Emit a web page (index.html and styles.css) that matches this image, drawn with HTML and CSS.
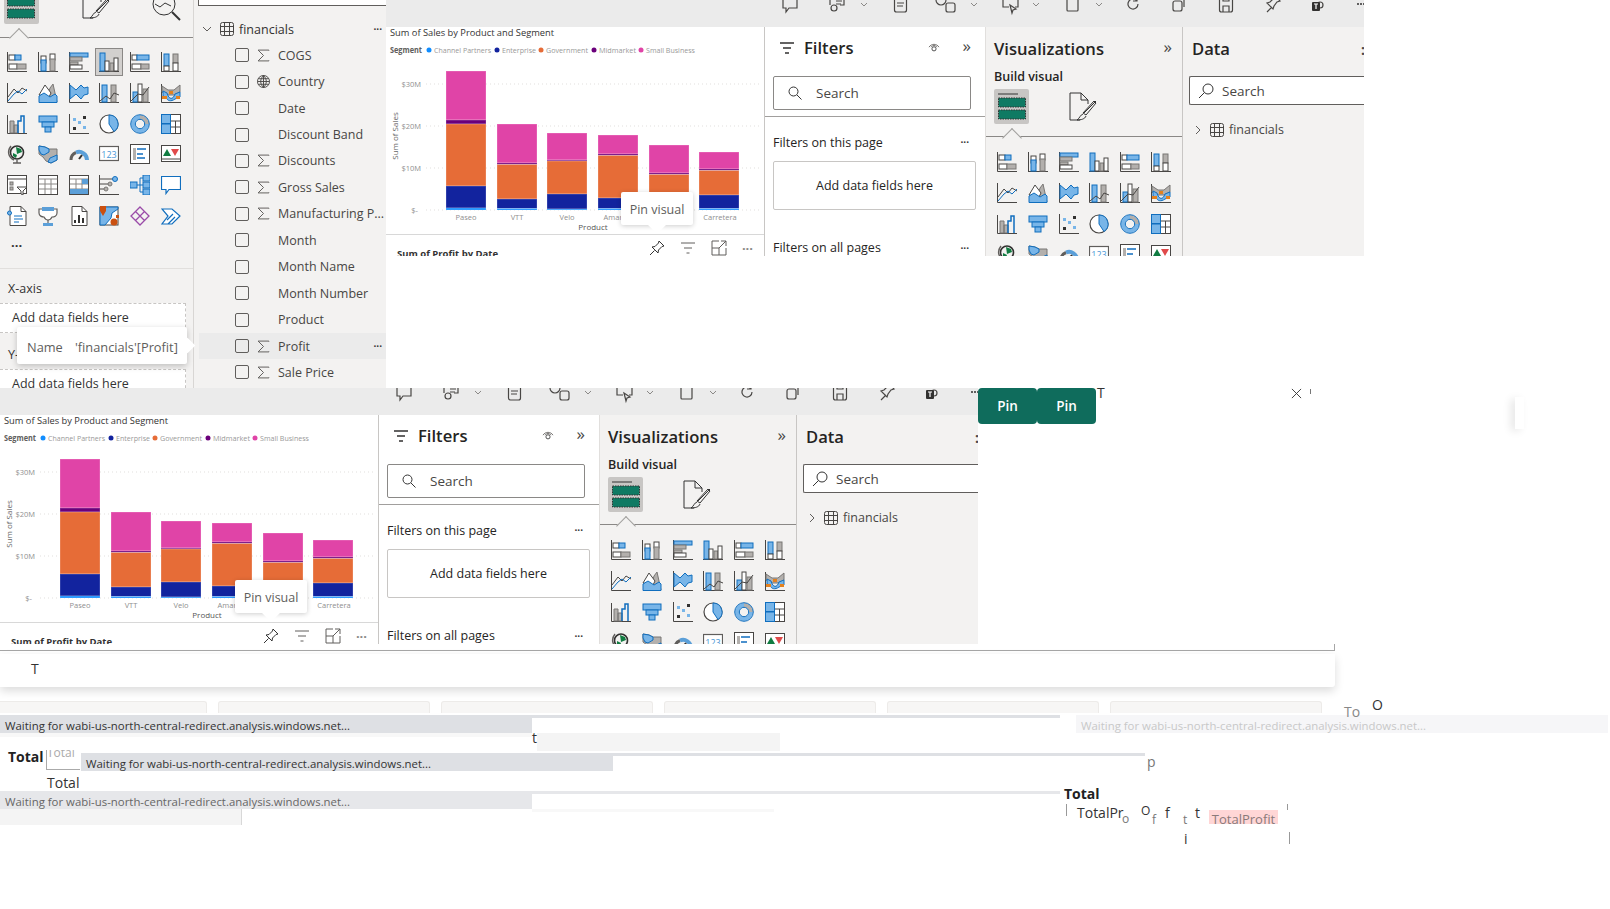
FILE: index.html
```html
<!DOCTYPE html>
<html lang="en">
<head>
<meta charset="utf-8">
<title>Power BI</title>
<link rel="stylesheet" href="styles.css">
</head>
<body>
<svg class="defs" aria-hidden="true">
<symbol id="i1" viewBox="0 0 20 20"><path class="k" d="M.5 0v19.5H20"/><rect class="w" x="2" y="3" width="6" height="5"/><rect class="b" x="8" y="3" width="6" height="5"/><rect class="w" x="2" y="12" width="8" height="5"/><rect class="g" x="10" y="12" width="9" height="5"/></symbol>
<symbol id="i2" viewBox="0 0 20 20"><path class="k" d="M0 19.5h20M.5 0v20"/><rect class="w" x="3" y="4" width="5" height="7"/><rect class="b" x="3" y="8" width="5" height="11"/><rect class="w" x="12" y="2" width="5" height="6"/><rect class="g" x="12" y="7" width="5" height="12"/></symbol>
<symbol id="i3" viewBox="0 0 20 20"><path class="k" d="M.5 0v19.5H20"/><rect class="b" x="1" y="1" width="18" height="4"/><rect class="g" x="1" y="5" width="12" height="4"/><rect class="g" x="1" y="10" width="8" height="3"/><rect class="w" x="1" y="13" width="12" height="4"/></symbol>
<symbol id="i4" viewBox="0 0 20 20"><path class="k" d="M0 19.5h20"/><rect class="b" x="1" y="1" width="5" height="18"/><rect class="w" x="6" y="9" width="4" height="10"/><rect class="g" x="11" y="11" width="4" height="8"/><rect class="w" x="15" y="6" width="4" height="13"/></symbol>
<symbol id="i5" viewBox="0 0 20 20"><path class="k" d="M.5 0v19.5H20"/><rect class="w" x="2" y="3" width="5" height="5"/><rect class="b" x="7" y="3" width="12" height="5"/><rect class="w" x="2" y="12" width="9" height="5"/><rect class="g" x="11" y="12" width="8" height="5"/></symbol>
<symbol id="i6" viewBox="0 0 20 20"><path class="k" d="M0 19.5h20M.5 0v20"/><rect class="b" x="3" y="2" width="5" height="12"/><rect class="w" x="3" y="14" width="5" height="5"/><rect class="g" x="12" y="2" width="5" height="9"/><rect class="w" x="12" y="11" width="5" height="8"/></symbol>
<symbol id="i7" viewBox="0 0 20 20"><path class="k" d="M.5 0v19.5H20M1 14l6-8 4 4 4-5 5 3"/><path class="bl" d="M1 18l6-7 4-3 4 3 5-5"/></symbol>
<symbol id="i8" viewBox="0 0 20 20"><path class="g" d="M12 5l3-4 4 18H8z"/><path class="w" d="M1 12L7 2l6 8-2 4z"/><path class="b" d="M1 19.500V13l5-3 6 4 5-3 2 2v6.500z"/></symbol>
<symbol id="i9" viewBox="0 0 20 20"><path class="k" d="M.5 0v19.500H20"/><path class="b" d="M1 2l6 5 5-5 3 3 4-1v7l-4 1-3 4-5-5-6 5z"/></symbol>
<symbol id="i10" viewBox="0 0 20 20"><path class="k" d="M.5 0v19.500H20"/><rect class="b" x="3" y="2" width="5" height="17"/><rect class="g" x="12" y="2" width="5" height="17"/><path class="k" d="M1 18l6-5 4 3 4-6 5 2"/></symbol>
<symbol id="i11" viewBox="0 0 20 20"><path class="k" d="M.5 0v19.500H20"/><rect class="b" x="3" y="9" width="5" height="10"/><rect class="w" x="8" y="1" width="4" height="18"/><rect class="g" x="13" y="6" width="5" height="13"/><path class="k" d="M1 18l7-7 5 1 6-8"/></symbol>
<symbol id="i12" viewBox="0 0 20 20"><path class="k" d="M.5 1v18.500H20"/><path class="g" d="M1 3l6 4h6l6-5v7l-6 3H7L1 9z"/><path class="b" d="M2 8l4 2c2 7 6 7 8 1l5-2v5l-5 2c-4 3-8 2-9-2l-3-1z"/><rect class="o" x="1" y="13" width="5" height="3"/><rect class="o" x="8" y="8" width="4" height="3"/><rect class="o" x="15" y="13" width="4" height="3"/></symbol>
<symbol id="i13" viewBox="0 0 20 20"><path class="k" d="M.5 1v18.500H20"/><path class="g" d="M3 19V7h4v12zM7 19v-8h4v8z"/><path class="bl2" d="M11 19V7h3V2h3v17"/></symbol>
<symbol id="i14" viewBox="0 0 20 20"><rect class="b" x="1" y="2" width="18" height="6"/><rect class="b" x="4" y="8" width="12" height="5"/><rect class="b" x="7" y="13" width="6" height="5"/></symbol>
<symbol id="i15" viewBox="0 0 20 20"><path class="k" d="M.5 0v19.500H20"/><rect class="sb" x="4" y="4" width="3" height="3"/><rect class="sd" x="14" y="2" width="3" height="3"/><rect class="sb" x="9" y="7" width="3" height="3"/><rect class="sd" x="4" y="13" width="3" height="3"/><rect class="sb" x="14" y="12" width="3" height="3"/></symbol>
<symbol id="i16" viewBox="0 0 20 20"><circle class="w2" cx="10" cy="10" r="9"/><path class="b3" d="M10 10V1a9 9 0 0 1 5 16.500z"/></symbol>
<symbol id="i17" viewBox="0 0 20 20"><circle class="dn" cx="10" cy="10" r="7"/><path class="dg" d="M10 3a7 7 0 0 1 7 7"/><circle class="do" cx="10" cy="10" r="9.300"/><circle class="do" cx="10" cy="10" r="4.700"/></symbol>
<symbol id="i18" viewBox="0 0 20 20"><rect class="w" x=".5" y=".5" width="19" height="19"/><rect class="b" x=".5" y=".5" width="9" height="9"/><rect class="b" x=".5" y="10" width="9" height="9.500"/><path class="k" d="M10 7h9.500M14.500 7v12.500M10 13h9.500"/></symbol>
<symbol id="i19" viewBox="0 0 20 20"><circle class="globe" cx="10" cy="8.500" r="6.500"/><path class="land" d="M9 3l5 2 1 3-5 2zM6 9l4 2-1 3-3-2z"/><path class="gst" d="M4 2c-4 5-3 11 3 14M6 19h8M10 16v3"/></symbol>
<symbol id="i20" viewBox="0 0 20 20"><path class="g" d="M1 2l6 1 4 2h8v11l-6 3-5-2-3-4-4-3z"/><path class="b" d="M1 2l6 1 4 2v3l-5 3-3-1-2-4z"/><path class="b" d="M19 11v5l-6 3-3-1 2-4z"/></symbol>
<symbol id="i21" viewBox="0 0 20 20"><path class="ga-g" d="M2 16a8 8 0 0 1 5-7.500"/><path class="ga-b" d="M7 8.500a8 8 0 0 1 11 7.500"/><path class="kk2" d="M10 15l3-4"/></symbol>
<symbol id="i22" viewBox="0 0 20 20"><rect class="cardg" x=".5" y="2.500" width="19" height="14"/><text class="num" x="10" y="13.500">123</text></symbol>
<symbol id="i23" viewBox="0 0 20 20"><rect class="w" x=".5" y=".5" width="19" height="19"/><rect class="ggf" x="3" y="4" width="3" height="12"/><path class="bl2" d="M7 5h9M7 10h6M7 14h8"/></symbol>
<symbol id="i24" viewBox="0 0 20 20"><rect class="w" x=".5" y="1.500" width="19" height="16"/><path class="tg" d="M6 5l4 7H2z"/><path class="tr" d="M10 5h8l-4 7z"/><path class="k" d="M1 15h18"/></symbol>
<symbol id="i25" viewBox="0 0 20 20"><rect class="w" x=".5" y=".5" width="19" height="18"/><path class="k" d="M1 4h18"/><rect class="g" x="3" y="7" width="3" height="3"/><rect class="g" x="3" y="12" width="3" height="3"/><path class="fw" d="M10 12h10l-4 4v4l-2-1v-3z"/></symbol>
<symbol id="i26" viewBox="0 0 20 20"><rect class="w" x=".5" y=".5" width="19" height="19"/><path class="kg" d="M.5 4h19M1 9h18M1 14h18M7 4v15M13 4v15"/></symbol>
<symbol id="i27" viewBox="0 0 20 20"><rect class="w" x=".5" y=".5" width="19" height="19"/><path class="kg" d="M1 4h18M1 9h18M1 14h18M7 4v15M13 4v15"/><rect class="bf" x="13" y="4" width="6" height="5"/><rect class="bf" x="1" y="14" width="6" height="5"/><rect class="bf" x="7" y="14" width="6" height="5"/><rect class="bf" x="13" y="14" width="6" height="5"/></symbol>
<symbol id="i28" viewBox="0 0 20 20"><path class="k" d="M.5 0v19.500H20M1 4h13M1 9h10M1 14h6"/><circle class="b" cx="16" cy="4" r="2.500"/><circle class="g" cx="7" cy="14" r="2"/><circle class="g" cx="11" cy="9" r="2"/></symbol>
<symbol id="i29" viewBox="0 0 20 20"><rect class="b" x="0" y="7" width="7" height="6"/><path class="bl" d="M7 10h3M10 3v14M10 3h3M10 10h3M10 17h3"/><rect class="b" x="13" y="0" width="7" height="6"/><rect class="b" x="13" y="7" width="7" height="6"/><rect class="b" x="13" y="14" width="7" height="6"/></symbol>
<symbol id="i30" viewBox="0 0 20 20"><path class="bubble" d="M.5 1.500h19v13H8l-3 4v-4H.5z"/></symbol>
<symbol id="i31" viewBox="0 0 20 20"><path class="w" d="M3 .5h11l5 5v14H3z"/><path class="k" d="M14 .5v5h5"/><circle class="b" cx="2.500" cy="7" r="2"/><path class="bl" d="M7 10h8M7 13h9M7 16h5"/></symbol>
<symbol id="i32" viewBox="0 0 20 20"><path class="g2" d="M1 3h18v4c0 3-3 4-5 4-1 2-2 3-4 3s-3-1-4-3c-2 0-5-1-5-4z"/><rect class="bf" x="4" y="1" width="12" height="4"/><rect class="bf" x="5" y="17" width="10" height="3"/><path class="k" d="M10 14v3"/></symbol>
<symbol id="i33" viewBox="0 0 20 20"><path class="w" d="M3 .5h10l5 5v14H3z"/><path class="k" d="M13 .5v5h5"/><path class="kk2" d="M6 17v-3M10 17V9M14 17v-5"/></symbol>
<symbol id="i34" viewBox="0 0 20 20"><rect class="w" x="1" y="1" width="18" height="18"/><path class="b" d="M1 1h18v2l-6 4-1 5-6 7H1z"/><path class="opin" d="M1 0h6v5l-3 5-3-5z"/><circle class="opin" cx="15" cy="16" r="3.500"/><rect class="opin" x="17" y="9" width="3" height="3"/></symbol>
<symbol id="i35" viewBox="0 0 20 20"><path class="pp" d="M10 1l9 9-9 9-9-9zM5.500 5.500l9 9M14.500 5.500l-9 9"/></symbol>
<symbol id="i36" viewBox="0 0 20 20"><path class="bubble" d="M1 3h10l8 7-8 8H1l6-8zM7 18l7-7M6 14l6-6"/></symbol>
<symbol id="sig" viewBox="0 0 12 12"><path class="sigp" d="M11 1.500V1H1l5 5-5 5h10v-.5"/></symbol>
<symbol id="tbl" viewBox="0 0 14 14"><rect class="tk" x=".5" y=".5" width="13" height="13" rx="2"/><path class="tk" d="M.5 4.500h13M.5 9.500h13M4.500 .5v13M9.500 .5v13"/></symbol>
<symbol id="fields" viewBox="0 0 28 28"><path class="kk" d="M0 1h20"/><rect class="gr" x=".5" y="5" width="27" height="9"/><rect class="gr" x=".5" y="17" width="27" height="9"/></symbol>
<symbol id="brush" viewBox="0 0 28 30"><path class="kk" d="M11 28H1V1h11l7 7v4M12 1v7h7"/><path class="kk" d="M27 9L15 21M14 22c-3 1-3 4-6 6 4 0 8-1 9-4"/><path class="kk" d="M25 9l2 2-10 12-3-2z"/></symbol>
<symbol id="pin" viewBox="0 0 16 16"><path class="kk" d="M10 1l5 5-2 .5-3.500 3.500-.5 3L3 7l3-.5L9.500 3zM5.500 10.500L1 15"/></symbol>
<symbol id="filt" viewBox="0 0 16 16"><path class="kf" d="M1 3h14M4 8h8M6.500 13h3"/></symbol>
<symbol id="expand" viewBox="0 0 16 16"><path class="kf" d="M8 1H1v14h14V8M10 1h5v5M15 1L8 8M1 8h7v7"/></symbol>
<symbol id="mag" viewBox="0 0 14 14"><circle class="kk" cx="5.500" cy="5.500" r="4.500"/><path class="kk" d="M9 9l4.500 4.500"/></symbol>
<symbol id="mag2" viewBox="0 0 16 16"><circle class="kk" cx="10" cy="6" r="5"/><path class="kk" d="M6.500 9.500L1 15"/></symbol>
<symbol id="tools" viewBox="0 0 978 27"><g class="tool"><path d="M397-4h14v12h-8l-3 4v-4h-3z"/><path d="M444-4h14v9h-4M444-4v9"/><circle cx="448" cy="8" r="3"/><path d="M450 1h6M450 4h5"/><path class="chv" d="M475 3l3 3 3-3M585 3l3 3 3-3M647 3l3 3 3-3M710 3l3 3 3-3"/><rect x="508.500" y="-4" width="12" height="16" rx="2"/><path d="M511 3h7M511 6h6"/><circle cx="555" cy="0" r="5"/><rect class="fillb" x="560" y="3" width="9" height="9" rx="2"/><path d="M617-4v11h6M632-4v11h-3"/><path class="fillb" d="M624 5l6 4-3 1-1 3z"/><path d="M681-4v14a1 1 0 0 0 1 1h9a1 1 0 0 0 1-1V0"/><path d="M751 1a5 5 0 1 0 1 3M751-3v4h-4"/><rect x="787" y="1" width="9" height="10" rx="2"/><path d="M790-2h8v9"/><rect x="833.500" y="-4" width="13" height="16" rx="2"/><path d="M837-4v5h6v-5M837 12V6h6v6"/><path d="M888-5l6 6-3 1-3 4-1 3-6-6 3-1 3-3zM881 12l5-5"/><circle cx="934" cy="5" r="3"/><rect class="team" x="926" y="2" width="8" height="9" rx="1"/><path class="teamt" d="M928 4h4M930 4v5"/><circle class="tdot" cx="972" cy="4" r="1"/><circle class="tdot" cx="975" cy="4" r="1"/><circle class="tdot" cx="978" cy="4" r="1"/></g></symbol>
</svg>

<section class="fields-win">
  <div class="left-viz">
    <div class="left-top">
      <svg class="green-top"><use href="#fields"/></svg>
      <svg class="brush-top"><use href="#brush"/></svg>
      <svg class="lens-top" viewBox="0 0 30 26"><circle class="kk" cx="12" cy="6" r="11"/><path class="kh" d="M20 14l8 8"/><path class="kk" d="M3 6l5 3 5-4 6 3"/></svg>
    </div>
    <div class="sep-notch"><span></span></div>
    <div class="grid">
      <svg class="vi"><use href="#i1"/></svg><svg class="vi"><use href="#i2"/></svg><svg class="vi"><use href="#i3"/></svg><svg class="vi sel"><use href="#i4"/></svg><svg class="vi"><use href="#i5"/></svg><svg class="vi"><use href="#i6"/></svg>
      <svg class="vi"><use href="#i7"/></svg><svg class="vi"><use href="#i8"/></svg><svg class="vi"><use href="#i9"/></svg><svg class="vi"><use href="#i10"/></svg><svg class="vi"><use href="#i11"/></svg><svg class="vi"><use href="#i12"/></svg>
      <svg class="vi"><use href="#i13"/></svg><svg class="vi"><use href="#i14"/></svg><svg class="vi"><use href="#i15"/></svg><svg class="vi"><use href="#i16"/></svg><svg class="vi"><use href="#i17"/></svg><svg class="vi"><use href="#i18"/></svg>
      <svg class="vi"><use href="#i19"/></svg><svg class="vi"><use href="#i20"/></svg><svg class="vi"><use href="#i21"/></svg><svg class="vi"><use href="#i22"/></svg><svg class="vi"><use href="#i23"/></svg><svg class="vi"><use href="#i24"/></svg>
      <svg class="vi"><use href="#i25"/></svg><svg class="vi"><use href="#i26"/></svg><svg class="vi"><use href="#i27"/></svg><svg class="vi"><use href="#i28"/></svg><svg class="vi"><use href="#i29"/></svg><svg class="vi"><use href="#i30"/></svg>
      <svg class="vi"><use href="#i31"/></svg><svg class="vi"><use href="#i32"/></svg><svg class="vi"><use href="#i33"/></svg><svg class="vi"><use href="#i34"/></svg><svg class="vi"><use href="#i35"/></svg><svg class="vi"><use href="#i36"/></svg>
    </div>
    <div class="more">...</div>
    <div class="well-sep"></div>
    <div class="well-label">X-axis</div>
    <div class="well">Add data fields here</div>
    <div class="well-label y-label">Y-axis</div>
    <div class="well">Add data fields here</div>
    <div class="field-tip"><span class="tip-k">Name</span><span>'financials'[Profit]</span></div>
  </div>
  <div class="left-data">
    <div class="data-search"></div>
    <div class="tree-head"><svg class="tw" viewBox="0 0 8 8"><path class="kf" d="M0 2l4 4 4-4"/></svg><svg class="tb"><use href="#tbl"/></svg><span class="tname">financials</span><span class="dots">...</span></div>
    <div class="frow"><i class="cb"></i><svg class="ico"><use href="#sig"/></svg><span>COGS</span></div>
    <div class="frow"><i class="cb"></i><svg class="ico" viewBox="0 0 14 14"><circle class="tk" cx="7" cy="7" r="6.500"/><path class="tk" d="M.5 7h13M1.500 4h11M1.500 10h11M7 .5v13M7 .5c-4 4-4 9 0 13M7 .5c4 4 4 9 0 13"/></svg><span>Country</span></div>
    <div class="frow"><i class="cb"></i><i class="ico"></i><span>Date</span></div>
    <div class="frow"><i class="cb"></i><i class="ico"></i><span>Discount Band</span></div>
    <div class="frow"><i class="cb"></i><svg class="ico"><use href="#sig"/></svg><span>Discounts</span></div>
    <div class="frow"><i class="cb"></i><svg class="ico"><use href="#sig"/></svg><span>Gross Sales</span></div>
    <div class="frow"><i class="cb"></i><svg class="ico"><use href="#sig"/></svg><span>Manufacturing P...</span></div>
    <div class="frow"><i class="cb"></i><i class="ico"></i><span>Month</span></div>
    <div class="frow"><i class="cb"></i><i class="ico"></i><span>Month Name</span></div>
    <div class="frow"><i class="cb"></i><i class="ico"></i><span>Month Number</span></div>
    <div class="frow"><i class="cb"></i><i class="ico"></i><span>Product</span></div>
    <div class="frow hover"><i class="cb"></i><svg class="ico"><use href="#sig"/></svg><span>Profit</span><span class="dots">...</span></div>
    <div class="frow"><i class="cb"></i><svg class="ico"><use href="#sig"/></svg><span>Sale Price</span></div>
  </div>
</section>

<section class="win win-a">
  <svg class="toolbar"><use href="#tools"/></svg>
  <div class="win-body">
    <div class="chart-col">
      <svg class="chart" viewBox="0 27 378 207">
        <text class="c-title" x="4" y="36" textLength="164" lengthAdjust="spacingAndGlyphs">Sum of Sales by Product and Segment</text>
        <text class="c-leg-h" x="4" y="53" textLength="32" lengthAdjust="spacingAndGlyphs">Segment</text>
        <circle class="f-ch" cx="43" cy="50" r="2.500"/><text class="c-leg" x="48" y="53" textLength="57" lengthAdjust="spacingAndGlyphs">Channel Partners</text>
        <circle class="f-en" cx="111" cy="50" r="2.500"/><text class="c-leg" x="116" y="53" textLength="34" lengthAdjust="spacingAndGlyphs">Enterprise</text>
        <circle class="f-go" cx="155" cy="50" r="2.500"/><text class="c-leg" x="160" y="53" textLength="42" lengthAdjust="spacingAndGlyphs">Government</text>
        <circle class="f-mi" cx="208" cy="50" r="2.500"/><text class="c-leg" x="213" y="53" textLength="37" lengthAdjust="spacingAndGlyphs">Midmarket</text>
        <circle class="f-sm" cx="255" cy="50" r="2.500"/><text class="c-leg" x="260" y="53" textLength="49" lengthAdjust="spacingAndGlyphs">Small Business</text>
        <path class="gridl" d="M40 84h335M40 126h335M40 168h335M40 210h335"/>
        <text class="c-y" x="35" y="87">$30M</text><text class="c-y" x="35" y="129">$20M</text><text class="c-y" x="35" y="171">$10M</text><text class="c-y" x="32" y="213">$-</text>
        <text class="c-axis" transform="translate(12 136) rotate(-90)">Sum of Sales</text>
        <g class="bars">
          <rect class="f-sm" x="60" y="71" width="40" height="49"/><rect class="f-mi" x="60" y="120" width="40" height="4"/><rect class="f-go" x="60" y="124" width="40" height="62"/><rect class="f-en" x="60" y="186" width="40" height="22"/><rect class="f-ch" x="60" y="208" width="40" height="2"/>
          <rect class="f-sm" x="111" y="124" width="40" height="39"/><rect class="f-mi" x="111" y="163" width="40" height="1.500"/><rect class="f-go" x="111" y="164.500" width="40" height="34.500"/><rect class="f-en" x="111" y="199" width="40" height="9.500"/><rect class="f-ch" x="111" y="208.500" width="40" height="1.500"/>
          <rect class="f-sm" x="161" y="133" width="40" height="27"/><rect class="f-mi" x="161" y="160" width="40" height="1"/><rect class="f-go" x="161" y="161" width="40" height="33"/><rect class="f-en" x="161" y="194" width="40" height="15"/><rect class="f-ch" x="161" y="209" width="40" height="1"/>
          <rect class="f-sm" x="212" y="135" width="40" height="19"/><rect class="f-mi" x="212" y="154" width="40" height="1.500"/><rect class="f-go" x="212" y="155.500" width="40" height="42.500"/><rect class="f-en" x="212" y="198" width="40" height="10.500"/><rect class="f-ch" x="212" y="208.500" width="40" height="1.500"/>
          <rect class="f-sm" x="263" y="145" width="40" height="28"/><rect class="f-mi" x="263" y="173" width="40" height="1.500"/><rect class="f-go" x="263" y="174.500" width="40" height="22"/><rect class="f-en" x="263" y="196.500" width="40" height="12"/><rect class="f-ch" x="263" y="208.500" width="40" height="1.500"/>
          <rect class="f-sm" x="313" y="152" width="40" height="17"/><rect class="f-mi" x="313" y="169" width="40" height="1.500"/><rect class="f-go" x="313" y="170.500" width="40" height="24.500"/><rect class="f-en" x="313" y="195" width="40" height="13.500"/><rect class="f-ch" x="313" y="208.500" width="40" height="1.500"/>
        </g>
        <text class="c-x" x="80" y="220">Paseo</text><text class="c-x" x="131" y="220">VTT</text><text class="c-x" x="181" y="220">Velo</text><text class="c-x" x="232" y="220">Amarilla</text><text class="c-x" x="283" y="220">Montana</text><text class="c-x" x="334" y="220">Carretera</text>
        <text class="c-prod" x="207" y="230">Product</text>
      </svg>
      <div class="chart-foot"><span class="foot-title">Sum of Profit by Date</span><svg class="fi"><use href="#pin"/></svg><svg class="fi"><use href="#filt"/></svg><svg class="fi"><use href="#expand"/></svg><span class="foot-dots">···</span></div>
      <div class="pin-tip">Pin visual</div>
    </div>
    <div class="filters">
      <div class="p-head"><svg class="hd-ic" viewBox="0 0 14 12"><path class="fh" d="M0 1h14M3 6h8M5 11h4"/></svg><h2>Filters</h2><svg class="eye" viewBox="0 0 14 12"><path class="kf" d="M1 5a7 7 0 0 1 12 0M3.500 5a4 4 0 0 1 7 0"/><circle class="kk" cx="7" cy="7" r="2.500"/></svg><span class="chev">»</span></div>
      <div class="f-search"><svg class="mi"><use href="#mag"/></svg><span>Search</span></div>
      <div class="f-sec"><span>Filters on this page</span><span class="dots">...</span></div>
      <div class="f-drop">Add data fields here</div>
      <div class="f-sec f-all"><span>Filters on all pages</span><span class="dots">...</span></div>
    </div>
    <div class="viz">
      <div class="p-head"><h2>Visualizations</h2><span class="chev">»</span></div>
      <div class="build">Build visual</div>
      <div class="modes"><span class="mode-sel"><svg class="mode-ic"><use href="#fields"/></svg></span><svg class="mode-br"><use href="#brush"/></svg></div>
      <div class="sep-notch"><span></span></div>
      <div class="grid">
        <svg class="vi"><use href="#i1"/></svg><svg class="vi"><use href="#i2"/></svg><svg class="vi"><use href="#i3"/></svg><svg class="vi"><use href="#i4"/></svg><svg class="vi"><use href="#i5"/></svg><svg class="vi"><use href="#i6"/></svg>
        <svg class="vi"><use href="#i7"/></svg><svg class="vi"><use href="#i8"/></svg><svg class="vi"><use href="#i9"/></svg><svg class="vi"><use href="#i10"/></svg><svg class="vi"><use href="#i11"/></svg><svg class="vi"><use href="#i12"/></svg>
        <svg class="vi"><use href="#i13"/></svg><svg class="vi"><use href="#i14"/></svg><svg class="vi"><use href="#i15"/></svg><svg class="vi"><use href="#i16"/></svg><svg class="vi"><use href="#i17"/></svg><svg class="vi"><use href="#i18"/></svg>
        <svg class="vi"><use href="#i19"/></svg><svg class="vi"><use href="#i20"/></svg><svg class="vi"><use href="#i21"/></svg><svg class="vi"><use href="#i22"/></svg><svg class="vi"><use href="#i23"/></svg><svg class="vi"><use href="#i24"/></svg>
      </div>
    </div>
    <div class="data">
      <div class="p-head"><h2>Data</h2><span class="data-more">:</span></div>
      <div class="d-search"><svg class="mi2"><use href="#mag2"/></svg><span>Search</span></div>
      <div class="d-tree"><svg class="tw2" viewBox="0 0 6 10"><path class="kf" d="M1 1l4 4-4 4"/></svg><svg class="tb"><use href="#tbl"/></svg><span>financials</span></div>
    </div>
  </div>
</section>

<section class="win win-b">
  <svg class="toolbar"><use href="#tools"/></svg>
  <div class="win-body">
    <div class="chart-col">
      <svg class="chart" viewBox="0 27 378 207">
        <text class="c-title" x="4" y="36" textLength="164" lengthAdjust="spacingAndGlyphs">Sum of Sales by Product and Segment</text>
        <text class="c-leg-h" x="4" y="53" textLength="32" lengthAdjust="spacingAndGlyphs">Segment</text>
        <circle class="f-ch" cx="43" cy="50" r="2.500"/><text class="c-leg" x="48" y="53" textLength="57" lengthAdjust="spacingAndGlyphs">Channel Partners</text>
        <circle class="f-en" cx="111" cy="50" r="2.500"/><text class="c-leg" x="116" y="53" textLength="34" lengthAdjust="spacingAndGlyphs">Enterprise</text>
        <circle class="f-go" cx="155" cy="50" r="2.500"/><text class="c-leg" x="160" y="53" textLength="42" lengthAdjust="spacingAndGlyphs">Government</text>
        <circle class="f-mi" cx="208" cy="50" r="2.500"/><text class="c-leg" x="213" y="53" textLength="37" lengthAdjust="spacingAndGlyphs">Midmarket</text>
        <circle class="f-sm" cx="255" cy="50" r="2.500"/><text class="c-leg" x="260" y="53" textLength="49" lengthAdjust="spacingAndGlyphs">Small Business</text>
        <path class="gridl" d="M40 84h335M40 126h335M40 168h335M40 210h335"/>
        <text class="c-y" x="35" y="87">$30M</text><text class="c-y" x="35" y="129">$20M</text><text class="c-y" x="35" y="171">$10M</text><text class="c-y" x="32" y="213">$-</text>
        <text class="c-axis" transform="translate(12 136) rotate(-90)">Sum of Sales</text>
        <g class="bars">
          <rect class="f-sm" x="60" y="71" width="40" height="49"/><rect class="f-mi" x="60" y="120" width="40" height="4"/><rect class="f-go" x="60" y="124" width="40" height="62"/><rect class="f-en" x="60" y="186" width="40" height="22"/><rect class="f-ch" x="60" y="208" width="40" height="2"/>
          <rect class="f-sm" x="111" y="124" width="40" height="39"/><rect class="f-mi" x="111" y="163" width="40" height="1.500"/><rect class="f-go" x="111" y="164.500" width="40" height="34.500"/><rect class="f-en" x="111" y="199" width="40" height="9.500"/><rect class="f-ch" x="111" y="208.500" width="40" height="1.500"/>
          <rect class="f-sm" x="161" y="133" width="40" height="27"/><rect class="f-mi" x="161" y="160" width="40" height="1"/><rect class="f-go" x="161" y="161" width="40" height="33"/><rect class="f-en" x="161" y="194" width="40" height="15"/><rect class="f-ch" x="161" y="209" width="40" height="1"/>
          <rect class="f-sm" x="212" y="135" width="40" height="19"/><rect class="f-mi" x="212" y="154" width="40" height="1.500"/><rect class="f-go" x="212" y="155.500" width="40" height="42.500"/><rect class="f-en" x="212" y="198" width="40" height="10.500"/><rect class="f-ch" x="212" y="208.500" width="40" height="1.500"/>
          <rect class="f-sm" x="263" y="145" width="40" height="28"/><rect class="f-mi" x="263" y="173" width="40" height="1.500"/><rect class="f-go" x="263" y="174.500" width="40" height="22"/><rect class="f-en" x="263" y="196.500" width="40" height="12"/><rect class="f-ch" x="263" y="208.500" width="40" height="1.500"/>
          <rect class="f-sm" x="313" y="152" width="40" height="17"/><rect class="f-mi" x="313" y="169" width="40" height="1.500"/><rect class="f-go" x="313" y="170.500" width="40" height="24.500"/><rect class="f-en" x="313" y="195" width="40" height="13.500"/><rect class="f-ch" x="313" y="208.500" width="40" height="1.500"/>
        </g>
        <text class="c-x" x="80" y="220">Paseo</text><text class="c-x" x="131" y="220">VTT</text><text class="c-x" x="181" y="220">Velo</text><text class="c-x" x="232" y="220">Amarilla</text><text class="c-x" x="283" y="220">Montana</text><text class="c-x" x="334" y="220">Carretera</text>
        <text class="c-prod" x="207" y="230">Product</text>
      </svg>
      <div class="chart-foot"><span class="foot-title">Sum of Profit by Date</span><svg class="fi"><use href="#pin"/></svg><svg class="fi"><use href="#filt"/></svg><svg class="fi"><use href="#expand"/></svg><span class="foot-dots">···</span></div>
      <div class="pin-tip">Pin visual</div>
    </div>
    <div class="filters">
      <div class="p-head"><svg class="hd-ic" viewBox="0 0 14 12"><path class="fh" d="M0 1h14M3 6h8M5 11h4"/></svg><h2>Filters</h2><svg class="eye" viewBox="0 0 14 12"><path class="kf" d="M1 5a7 7 0 0 1 12 0M3.500 5a4 4 0 0 1 7 0"/><circle class="kk" cx="7" cy="7" r="2.500"/></svg><span class="chev">»</span></div>
      <div class="f-search"><svg class="mi"><use href="#mag"/></svg><span>Search</span></div>
      <div class="f-sec"><span>Filters on this page</span><span class="dots">...</span></div>
      <div class="f-drop">Add data fields here</div>
      <div class="f-sec f-all"><span>Filters on all pages</span><span class="dots">...</span></div>
    </div>
    <div class="viz">
      <div class="p-head"><h2>Visualizations</h2><span class="chev">»</span></div>
      <div class="build">Build visual</div>
      <div class="modes"><span class="mode-sel"><svg class="mode-ic"><use href="#fields"/></svg></span><svg class="mode-br"><use href="#brush"/></svg></div>
      <div class="sep-notch"><span></span></div>
      <div class="grid">
        <svg class="vi"><use href="#i1"/></svg><svg class="vi"><use href="#i2"/></svg><svg class="vi"><use href="#i3"/></svg><svg class="vi"><use href="#i4"/></svg><svg class="vi"><use href="#i5"/></svg><svg class="vi"><use href="#i6"/></svg>
        <svg class="vi"><use href="#i7"/></svg><svg class="vi"><use href="#i8"/></svg><svg class="vi"><use href="#i9"/></svg><svg class="vi"><use href="#i10"/></svg><svg class="vi"><use href="#i11"/></svg><svg class="vi"><use href="#i12"/></svg>
        <svg class="vi"><use href="#i13"/></svg><svg class="vi"><use href="#i14"/></svg><svg class="vi"><use href="#i15"/></svg><svg class="vi"><use href="#i16"/></svg><svg class="vi"><use href="#i17"/></svg><svg class="vi"><use href="#i18"/></svg>
        <svg class="vi"><use href="#i19"/></svg><svg class="vi"><use href="#i20"/></svg><svg class="vi"><use href="#i21"/></svg><svg class="vi"><use href="#i22"/></svg><svg class="vi"><use href="#i23"/></svg><svg class="vi"><use href="#i24"/></svg>
      </div>
    </div>
    <div class="data">
      <div class="p-head"><h2>Data</h2><span class="data-more">:</span></div>
      <div class="d-search"><svg class="mi2"><use href="#mag2"/></svg><span>Search</span></div>
      <div class="d-tree"><svg class="tw2" viewBox="0 0 6 10"><path class="kf" d="M1 1l4 4-4 4"/></svg><svg class="tb"><use href="#tbl"/></svg><span>financials</span></div>
    </div>
  </div>
</section>

<div class="pins"><button class="pin-btn">Pin</button><button class="pin-btn">Pin</button></div>
<span class="fr fr-t1">T</span>
<svg class="fr fr-x" viewBox="0 0 12 12"><path class="kk" d="M1 1l10 10M11 1L1 11"/></svg>
<span class="fr fr-tick1"></span>
<div class="fr fr-ghost"></div>

<div class="fr rule"></div>
<div class="fr rule-end"></div>
<div class="fr sheet"><span>T</span></div>
<div class="fr tiles"><i></i><i></i><i></i><i></i><i></i><i></i></div>

<div class="fr strip s1"></div><div class="fr strip s2"></div><div class="fr strip s3"></div>
<div class="fr pale p1"></div><div class="fr pale p2"></div><div class="fr pale p3"></div><div class="fr pale p4"></div>
<div class="fr wait w1">Waiting for wabi-us-north-central-redirect.analysis.windows.net...</div>
<div class="fr wait w2">Waiting for wabi-us-north-central-redirect.analysis.windows.net...</div>
<div class="fr wait w3">Waiting for wabi-us-north-central-redirect.analysis.windows.net...</div>
<div class="fr wait w4">Waiting for wabi-us-north-central-redirect.analysis.windows.net...</div>

<span class="fr txt t-small">t</span>
<span class="fr txt t-total-b">Total</span>
<div class="fr total-box">Total</div>
<span class="fr txt t-total">Total</span>
<span class="fr txt t-total-r">Total</span>
<span class="fr txt t-tp">TotalPr</span>
<span class="fr txt t-o">o</span>
<span class="fr txt t-o3">O</span>
<span class="fr txt t-f">f</span>
<span class="fr txt t-f2">f</span>
<span class="fr txt t-t">t</span>
<span class="fr txt t-t2">t</span>
<div class="fr profit">TotalProfit</div>
<span class="fr txt t-i">i</span>
<span class="fr tick t1"></span><span class="fr tick t2"></span><span class="fr tick t3"></span>
<span class="fr txt t-to">To</span>
<span class="fr txt t-o2">O</span>
<span class="fr txt t-p">p</span>
</body>
</html>
```
FILE: styles.css
```css
* { box-sizing: border-box; }
html, body { margin: 0; padding: 0; }
body { width: 1610px; height: 909px; position: relative; overflow: hidden; background: #fff; font-family: "Open Sans", "Noto Sans", sans-serif; color: #333; font-size: 13px; }
.defs { position: absolute; width: 0; height: 0; }

/* icon paint */
.k { fill: none; stroke: #484644; stroke-width: 1; }
.kk { fill: none; stroke: #333; stroke-width: 1; }
.kk2 { fill: none; stroke: #323130; stroke-width: 2; }
.kh { fill: none; stroke: #333; stroke-width: 2; }
.kf { fill: none; stroke: #605e5c; stroke-width: 1; }
.kg { fill: none; stroke: #8a8886; stroke-width: 1; }
.w { fill: #fff; stroke: #484644; stroke-width: 1; }
.b { fill: #78b5e8; stroke: #106ebe; stroke-width: 1; }
.g { fill: #b3b0ad; stroke: #797775; stroke-width: 1; }
.bl { fill: none; stroke: #106ebe; stroke-width: 1; }
.bl2 { fill: none; stroke: #106ebe; stroke-width: 1.5; }
.o { fill: #e3811f; }
.sb { fill: #78b5e8; }
.sd { fill: #323130; }
.w2 { fill: #fff; stroke: #484644; stroke-width: 1.2; }
.b3 { fill: #78b5e8; stroke: #106ebe; }
.dn { fill: none; stroke: #78b5e8; stroke-width: 4; }
.dg { fill: none; stroke: #b3b0ad; stroke-width: 4; }
.do { fill: none; stroke: #106ebe; stroke-width: 1; }
.globe { fill: #f3f2f1; stroke: #323130; stroke-width: 1.6; }
.land { fill: #107c41; }
.gst { fill: none; stroke: #605e5c; stroke-width: 1.4; }
.ga-g { fill: none; stroke: #605e5c; stroke-width: 3; }
.ga-b { fill: none; stroke: #5b9fd8; stroke-width: 4; }
.cardg { fill: #fff; stroke: #605e5c; stroke-width: 1.2; }
.num { font-family: "Open Sans", sans-serif; font-size: 9px; fill: #4b97d6; text-anchor: middle; }
.ggf { fill: #b3b0ad; }
.tg { fill: #107c41; }
.tr { fill: #e04a4a; }
.fw { fill: #fff; stroke: #484644; }
.bf { fill: #5b9fd8; }
.bubble { fill: #fff; stroke: #106ebe; stroke-width: 1.2; }
.g2 { fill: #fff; stroke: #605e5c; stroke-width: 1.2; }
.opin { fill: #ca5010; }
.pp { fill: none; stroke: #9a4ba8; stroke-width: 1.3; }
.sigp { fill: none; stroke: #605e5c; stroke-width: .9; }
.tk { fill: none; stroke: #484644; stroke-width: 1; }
.gr { fill: #0f7a63; stroke: #333; stroke-width: 1; stroke-dasharray: 1.5 1; }
.fh { fill: none; stroke: #323130; stroke-width: 1.5; }

/* top-left fields panel */
.fields-win { position: absolute; left: 0; top: 0; width: 386px; height: 388px; overflow: hidden; display: flex; }
.left-viz { position: relative; width: 194px; background: #f3f2f1; border-right: 1px solid #d8d6d4; }
.left-top { position: relative; height: 28px; }
.left-top::before { content: ""; position: absolute; left: 4px; top: -10px; width: 35px; height: 34px; background: #c8c6c4; border-radius: 2px; }
.green-top { position: absolute; left: 7px; top: -8px; width: 28px; height: 28px; z-index: 1; }
.brush-top { position: absolute; left: 82px; top: -10px; width: 28px; height: 30px; }
.lens-top { position: absolute; left: 152px; top: -2px; width: 30px; height: 26px; }
.sep-notch { position: relative; height: 10px; border-bottom: 1px solid #8a8886; }
.sep-notch span { position: absolute; left: 12px; top: 0; width: 14px; height: 14px; background: #f3f2f1; border-left: 1px solid #a19f9d; border-top: 1px solid #a19f9d; transform: translateY(3px) rotate(45deg); }
.grid { display: grid; grid-template-columns: repeat(6, 20px); column-gap: 10.8px; row-gap: 10.8px; padding: 14px 0 0 7px; }
.vi { width: 20px; height: 20px; display: block; }
.sel { background: #d2d0ce; box-shadow: 0 0 0 3px #d2d0ce, 0 0 0 4px #8a8886; }
.more { font-weight: 700; color: #333; margin: 8px 0 0 11px; line-height: 16px; font-size: 13px; }
.well-sep { margin-top: 18px; border-top: 1px solid #e1dfdd; }
.well-label { margin: 10px 0 0 8px; line-height: 20px; font-size: 12.5px; }
.well { height: 30px; width: 186px; margin-top: 4px; background: #fff; border: 1px dashed #c8c6c4; border-left: 0; padding-left: 12px; line-height: 28px; font-size: 12.5px; }
.y-label { margin-top: 12px; }
.field-tip { position: absolute; left: 17px; top: 327px; width: 170px; height: 37px; background: #fff; box-shadow: 0 2px 6px rgba(0,0,0,.22); border-radius: 2px; display: flex; align-items: center; padding: 2px 0 0 10px; color: #605e5c; font-size: 12.8px; z-index: 2; white-space: nowrap; }
.tip-k { width: 48px; }
.field-tip::after { content: ""; position: absolute; right: -6px; top: 13px; width: 11px; height: 11px; background: #fff; transform: rotate(45deg); }

.left-data { position: relative; width: 192px; background: #f3f2f1; }
.data-search { margin-left: 4px; height: 6px; background: #fff; border: 1px solid #605e5c; border-top: 0; border-right: 0; }
.tree-head { display: flex; align-items: center; height: 26px; margin-top: 10px; padding-left: 9px; font-size: 12.5px; color: #323130; }
.tw { width: 8px; height: 8px; margin-right: 9px; }
.tb { width: 14px; height: 14px; flex: none; }
.tname { margin-left: 5px; }
.dots { margin-left: auto; font-weight: 700; font-size: 10px; line-height: 8px; padding-bottom: 6px; color: #333; padding-right: 4px; }
.frow { display: flex; align-items: center; height: 26.45px; padding-left: 41px; font-size: 12.5px; color: #484644; white-space: nowrap; }
.cb { width: 14px; height: 14px; border: 1px solid #605e5c; border-radius: 2px; flex: none; margin-right: 8px; }
.ico { width: 13px; height: 13px; flex: none; margin-right: 8px; display: block; }
.hover { background: #ebebeb; margin-left: 5px; padding-left: 36px; }

/* repeated report window */
.win { position: absolute; width: 978px; height: 256px; overflow: hidden; background: #fff; }
.win-a { left: 386px; top: 0; }
.win-b { left: 0; top: 388px; }
.toolbar { display: block; width: 978px; height: 27px; background: #ebebeb; }
.tool path, .tool circle, .tool rect { fill: none; stroke: #484644; stroke-width: 1.2; }
.tool .chv { stroke: #8a8886; stroke-width: 1; }
.tool .fillb { fill: #ebebeb; }
.tool .team { fill: #323130; stroke: none; }
.tool .teamt { stroke: #fff; }
.tool .tdot { fill: #323130; stroke: none; }
.win-body { display: flex; height: 229px; }
.chart-col { position: relative; width: 378px; flex: none; }
.chart { display: block; width: 378px; height: 207px; }
.c-title { font-size: 9.5px; fill: #333; }
.c-leg-h { font-size: 8px; font-weight: 700; fill: #605e5c; }
.c-leg { font-size: 8px; fill: #999; }
.f-ch { fill: #118dff; }
.f-en { fill: #12239e; }
.f-go { fill: #e66c37; }
.f-mi { fill: #6b007b; }
.f-sm { fill: #e044a7; }
.bars rect { stroke: #fff; stroke-opacity: .25; stroke-width: 1; }
.gridl { fill: none; stroke: #e1dfdd; stroke-width: 1; stroke-dasharray: 1 3; }
.c-y { font-size: 7.5px; fill: #8f8f8f; text-anchor: end; }
.c-axis { font-size: 8px; fill: #666; text-anchor: middle; }
.c-x { font-size: 7.5px; fill: #8f8f8f; text-anchor: middle; }
.c-prod { font-size: 8px; fill: #555; text-anchor: middle; }
.chart-foot { position: relative; height: 22px; border-top: 1px solid #d8d8d8; display: flex; align-items: center; padding: 7px 11px 0 11px; }
.foot-title { font-size: 9.5px; font-weight: 700; color: #333; line-height: 12px; margin-top: 9px; margin-right: auto; white-space: nowrap; }
.fi { width: 16px; height: 16px; flex: none; margin-right: 15px; margin-top: -3px; }
.foot-dots { color: #8a8886; font-weight: 700; font-size: 13px; margin-top: -3px; }
.pin-tip { position: absolute; left: 235px; top: 165px; width: 72px; height: 33px; background: #fff; border-radius: 2px; box-shadow: 0 1px 5px rgba(0,0,0,.2); font-size: 12.5px; color: #605e5c; text-align: center; line-height: 35px; }
.pin-tip::after { content: ""; position: absolute; left: 29px; top: 25px; width: 14px; height: 14px; background: #fff; transform: rotate(45deg); }

.filters { width: 221px; flex: none; border-left: 1px solid #c8c6c4; background: #fff; position: relative; }
.p-head { display: flex; align-items: center; height: 42px; }
.p-head h2 { margin: 0; font-size: 16.6px; font-weight: 600; color: #252423; line-height: 40px; }
.filters .p-head { padding-left: 15px; }
.hd-ic { width: 14px; height: 12px; margin-right: 10px; }
.eye { width: 12px; height: 10px; margin-left: auto; margin-right: 23px; }
.chev { font-size: 17px; color: #484644; line-height: 20px; margin-bottom: 4px; }
.filters .chev { margin-right: 14px; }
.f-search { margin: 7px 0 0 8px; width: 198px; height: 34px; border: 1px solid #8a8886; border-radius: 2px; display: flex; align-items: center; padding-left: 14px; font-size: 13.5px; color: #484644; }
.mi { width: 14px; height: 14px; margin-right: 14px; }
.f-sec { display: flex; margin-top: 6px; padding: 0 14px 0 8px; align-items: center; height: 20px; font-size: 12.5px; color: #252423; }
.filters .f-search + .f-sec { border-top: 1px solid #a19f9d; margin: 6px 0 0; padding-top: 15px; height: 36px; }
.f-sec .dots { padding-right: 2px; }
.f-drop { margin: 9px 0 0 8px; width: 203px; height: 49px; border: 1px solid #c8c6c4; border-radius: 2px; text-align: center; line-height: 47px; font-size: 12.5px; color: #252423; }
.f-all { margin-top: 26px; padding-top: 3px; }

.viz { width: 198px; flex: none; background: #f3f2f1; border-right: 1px solid #c8c6c4; position: relative; border-left: 1px solid #e1dfdd; }
.viz .p-head { padding: 2px 10px 0 8px; justify-content: space-between; }
.build { margin: 1px 0 0 8px; font-size: 12.5px; font-weight: 600; color: #252423; line-height: 14px; }
.modes { display: flex; align-items: flex-start; padding-left: 8px; margin-top: 5px; height: 35px; }
.mode-sel { width: 35px; height: 35px; background: #c8c6c4; border-radius: 2px; display: flex; align-items: center; justify-content: center; }
.mode-ic { width: 28px; height: 28px; }
.mode-br { width: 28px; height: 30px; margin-left: 40px; margin-top: 3px; }
.viz .sep-notch { height: 13px; }
.viz .sep-notch span { left: 19px; top: 4px; }
.viz .grid { padding: 15px 0 0 11px; }

.data { flex: 1; background: #f3f2f1; position: relative; }
.data .p-head { padding: 2px 0 0 9px; justify-content: space-between; }
.data-more { font-size: 14px; font-weight: 700; color: #484644; margin-right: -1px; }
.d-search { margin: 7px 0 0 6px; height: 29px; border: 1px solid #605e5c; border-right: 0; border-radius: 2px 0 0 2px; background: #fff; display: flex; align-items: center; padding-left: 8px; font-size: 13.5px; color: #484644; }
.mi2 { width: 16px; height: 16px; margin-right: 8px; }
.d-tree { display: flex; align-items: center; margin: 16px 0 0 12px; font-size: 12.5px; color: #484644; }
.tw2 { width: 6px; height: 10px; margin-right: 9px; }
.d-tree .tb { margin-right: 5px; }

/* glitched fragments: free canvas */
.fr { position: absolute; }
.pins { position: absolute; left: 978px; top: 388px; display: flex; }
.pin-btn { width: 59px; height: 36px; border: 0; border-radius: 4px; background: #0f6c5c; color: #fff; font-family: "Open Sans", sans-serif; font-weight: 600; font-size: 13.5px; padding: 0; }
.fr-t1 { left: 1097px; top: 384px; font-size: 14px; line-height: 18px; color: #333; }
.fr-x { left: 1291px; top: 388px; width: 11px; height: 11px; }
.fr-tick1 { left: 1310px; top: 389px; width: 1px; height: 5px; background: #777; }
.fr-ghost { left: 1515px; top: 397px; width: 9px; height: 32px; background: #fff; box-shadow: -4px 2px 8px rgba(0,0,0,.1); }

.rule { left: 0; top: 650px; width: 1335px; height: 1px; background: #a6a6a6; }
.rule-end { left: 1334px; top: 644px; width: 1px; height: 6px; background: #a6a6a6; }
.sheet { left: 0; top: 654px; width: 1335px; height: 33px; background: #fff; border-radius: 0 0 3px 0; box-shadow: 0 4px 10px rgba(0,0,0,.14); padding-left: 31px; font-size: 14px; line-height: 30px; color: #333; }
.tiles { left: -5px; top: 701px; width: 1327px; height: 12px; display: grid; grid-template-columns: repeat(6, 1fr); column-gap: 11px; }
.tiles i { background: #f7f6f5; border: 1px solid #edebe9; border-bottom: 0; border-radius: 3px 3px 0 0; }
.strip { height: 3px; }
.s1 { left: 532px; top: 715px; width: 528px; background: #dee0e4; }
.s2 { left: 613px; top: 753px; width: 532px; background: #dee0e4; }
.s3 { left: 532px; top: 791px; width: 528px; background: #e6e7ea; }
.pale { background: #f4f4f4; }
.p1 { left: 0; top: 733px; width: 532px; height: 4px; background: #f8f8f8; }
.p2 { left: 537px; top: 733px; width: 243px; height: 18px; }
.p3 { left: 0; top: 809px; width: 242px; height: 16px; border-right: 1px solid #d8d8d8; }
.p4 { left: 532px; top: 809px; width: 242px; height: 3px; background: #f8f8f8; }
.wait { height: 18px; line-height: 21px; font-size: 11.4px; white-space: nowrap; padding-left: 5px; color: #333; width: 532px; }
.w1 { left: 0; top: 715px; background: #dee0e4; }
.w2 { left: 81px; top: 753px; background: #dee0e4; }
.w3 { left: 0; top: 791px; background: #e6e7ea; color: #666; }
.w4 { left: 1076px; top: 715px; background: #f6f6f8; color: #c8c8c8; }
.txt { font-size: 14px; line-height: 18px; color: #333; white-space: nowrap; }
.t-small { left: 532px; top: 729px; }
.t-total-b { left: 8px; top: 748px; font-weight: 700; color: #222; }
.total-box { left: 46px; top: 750px; width: 34px; height: 20px; border-left: 1px solid #aaa; border-bottom: 1px solid #aaa; font-size: 12px; line-height: 6px; color: #aaa; overflow: hidden; background: #fff; }
.t-total { left: 47px; top: 774px; }
.t-total-r { left: 1064px; top: 785px; font-weight: 700; color: #222; }
.t-tp { left: 1077px; top: 804px; }
.t-o { left: 1122px; top: 810px; font-size: 12px; color: #777; }
.t-o3 { left: 1141px; top: 802px; font-size: 12px; }
.t-f { left: 1152px; top: 811px; font-size: 12px; color: #777; }
.t-f2 { left: 1165px; top: 804px; }
.t-t { left: 1183px; top: 811px; font-size: 12px; color: #777; }
.t-t2 { left: 1195px; top: 804px; }
.profit { left: 1209px; top: 810px; width: 69px; height: 14px; background: #ffd6d6; color: #8a7a7a; font-size: 13px; line-height: 18px; text-align: center; overflow: hidden; }
.t-i { left: 1184px; top: 830px; }
.tick { width: 1px; height: 12px; background: #999; }
.t1 { left: 1289px; top: 832px; }
.t2 { left: 1287px; top: 804px; height: 6px; }
.t3 { left: 1066px; top: 804px; height: 12px; }
.t-to { left: 1344px; top: 703px; color: #888; }
.t-o2 { left: 1372px; top: 696px; }
.t-p { left: 1147px; top: 753px; color: #777; }
```
